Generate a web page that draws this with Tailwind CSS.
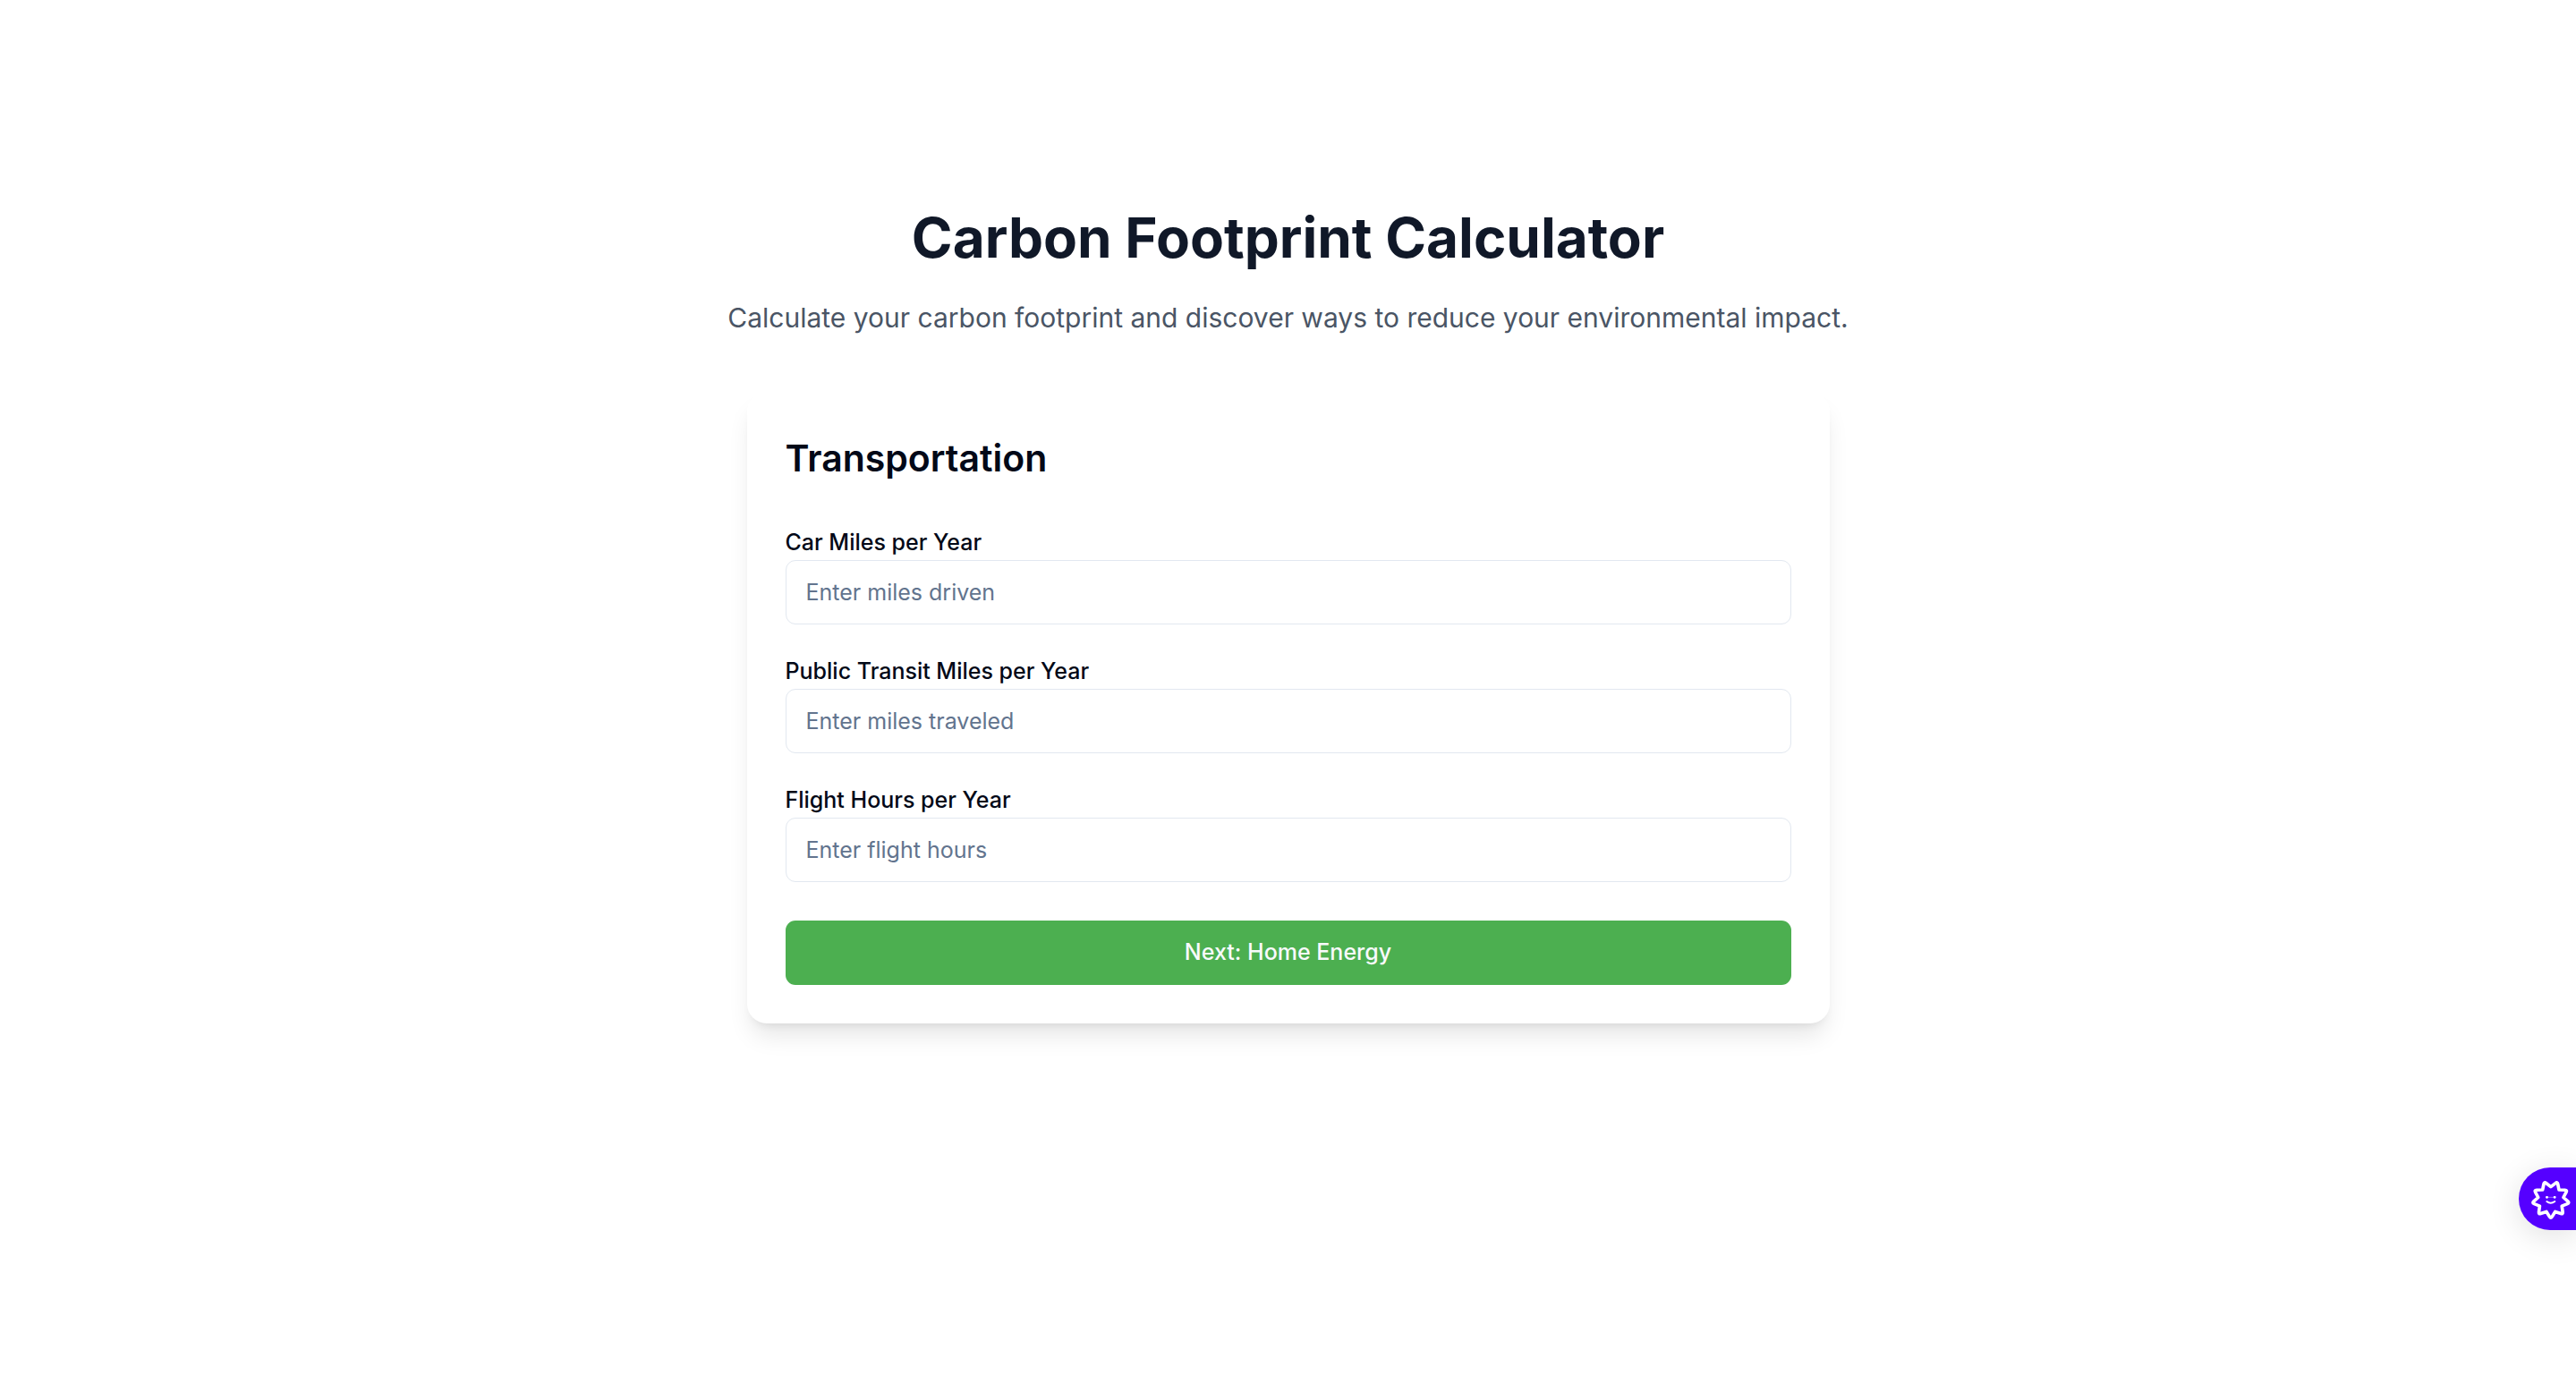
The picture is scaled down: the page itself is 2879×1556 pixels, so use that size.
<!DOCTYPE html>
<html lang="en">
<head>
<meta charset="utf-8">
<meta name="viewport" content="width=device-width, initial-scale=1">
<title>Carbon Footprint Calculator</title>
<script src="https://cdn.jsdelivr.net/npm/@tailwindcss/browser@4"></script>
</head>
<body class="bg-white font-['Inter',sans-serif] text-[25px] text-[#020817]">
<main class="flex min-h-screen flex-col items-center px-7 pt-[230px] pb-28">
  <header class="flex flex-col gap-7 text-center">
    <h1 class="text-[62px] leading-[72px] font-bold text-gray-900">Carbon Footprint Calculator</h1>
    <p class="text-[30px] leading-[50px] text-gray-600">Calculate your carbon footprint and discover ways to reduce your environmental impact.</p>
  </header>
  <form class="mt-[58px] flex w-full max-w-[1210px] flex-col gap-[43px] rounded-[22px] bg-white p-[43px] shadow-[0_18px_27px_-5px_rgb(0_0_0/0.1),0_7px_11px_-7px_rgb(0_0_0/0.1)]">
    <h2 class="text-[41px] leading-[62px] font-semibold">Transportation</h2>
    <div class="flex flex-col gap-8">
      <div class="flex flex-col">
        <label for="car" class="leading-10 font-medium">Car Miles per Year</label>
        <input id="car" type="text" placeholder="Enter miles driven" class="h-[72px] w-full rounded-[11px] border border-slate-200 px-[22px] placeholder:text-slate-500">
      </div>
      <div class="flex flex-col">
        <label for="transit" class="leading-10 font-medium">Public Transit Miles per Year</label>
        <input id="transit" type="text" placeholder="Enter miles traveled" class="h-[72px] w-full rounded-[11px] border border-slate-200 px-[22px] placeholder:text-slate-500">
      </div>
      <div class="flex flex-col">
        <label for="flight" class="leading-10 font-medium">Flight Hours per Year</label>
        <input id="flight" type="text" placeholder="Enter flight hours" class="h-[72px] w-full rounded-[11px] border border-slate-200 px-[22px] placeholder:text-slate-500">
      </div>
    </div>
    <button type="button" class="h-[72px] w-full rounded-[11px] bg-[#4caf50] font-medium text-slate-50">Next: Home Energy</button>
  </form>
</main>
<button type="button" aria-label="Open assistant" class="fixed right-0 bottom-[181px] flex h-[70px] w-16 items-center rounded-l-full bg-[#5500ff] pl-[10px] shadow-[0_7px_36px_rgb(0_0_0/0.12)]">
  <svg class="size-[52px] shrink-0" viewBox="0 0 156 156" fill="none" stroke="#fff" stroke-linejoin="round" stroke-linecap="round">
    <path stroke-width="11" d="M73.4 138.4Q77.5 145 81.6 138.4L92.2 121.4L111.2 127.6Q118.6 130 117.5 122.3L114.7 102.5L133.3 95Q140.5 92.1 134.7 86.9L119.8 73.5L129.2 55.9Q132.9 49 125.1 48.7L105.1 48.1L101 28.5Q99.4 20.9 93.3 25.7L77.5 38L61.7 25.7Q55.6 20.9 54 28.5L49.9 48.1L29.9 48.7Q22.1 49 25.8 55.9L35.2 73.5L20.3 86.9Q14.5 92.1 21.7 95L40.3 102.5L37.5 122.3Q36.4 130 43.8 127.6L62.8 121.4Z"/>
    <path stroke-width="2" stroke-opacity="0.6" d="M62 73H92"/>
    <path stroke-width="8" d="M64 73h1M90 73h1"/>
    <path stroke-width="6" d="M64 87Q77 97 91 87"/>
  </svg>
</button>
</body>
</html>
